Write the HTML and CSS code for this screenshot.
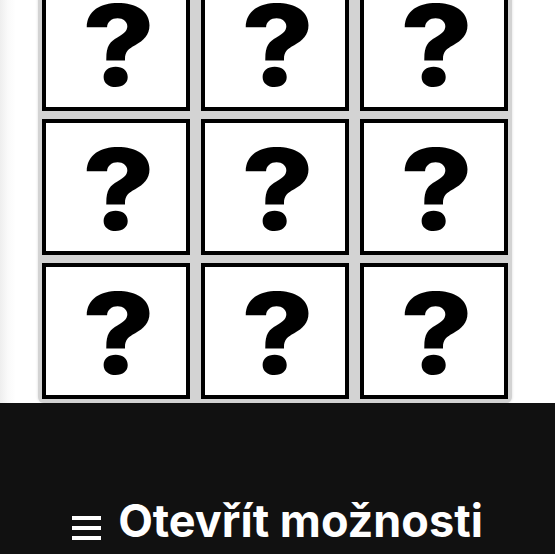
FILE: index.html
```html
<!DOCTYPE html>
<html lang="cs">
<head>
<meta charset="utf-8">
<title>Hra</title>
<link rel="stylesheet" href="styles.css">
</head>
<body>
<main class="page">
  <div class="board">
    <div class="card"><span class="mark">?</span></div>
    <div class="card"><span class="mark">?</span></div>
    <div class="card"><span class="mark">?</span></div>
    <div class="card"><span class="mark">?</span></div>
    <div class="card"><span class="mark">?</span></div>
    <div class="card"><span class="mark">?</span></div>
    <div class="card"><span class="mark">?</span></div>
    <div class="card"><span class="mark">?</span></div>
    <div class="card"><span class="mark">?</span></div>
  </div>
</main>
<footer class="bar">
  <button class="open-btn" type="button">
    <svg class="burger" width="29" height="24" viewBox="0 0 29 24" aria-hidden="true">
      <rect x="0" y="0" width="29" height="4" fill="#fff"/>
      <rect x="0" y="10" width="29" height="4" fill="#fff"/>
      <rect x="0" y="20" width="29" height="4" fill="#fff"/>
    </svg>
    <span class="label">Otevřít možnosti</span>
  </button>
</footer>
</body>
</html>
```
FILE: styles.css
```css
html, body {
  margin: 0;
  padding: 0;
}
body {
  background: linear-gradient(to right, #eeeeee 0, #fafafa 8px, #ffffff 16px);
  font-family: Inter, "Liberation Sans", sans-serif;
  overflow: hidden;
  height: 554px;
}
.page {
  padding-left: 38px;
}
.board {
  width: 466px;
  margin-top: -29px;
  padding: 4px;
  background: #d3d3d3;
  border-radius: 0 0 6px 6px;
  box-shadow: 0 0 3px rgba(0, 0, 0, 0.15);
  display: grid;
  grid-template-columns: repeat(3, 148px);
  grid-auto-rows: 136px;
  column-gap: 11px;
  row-gap: 8px;
}
.card {
  box-sizing: border-box;
  background: #fff;
  border: 4px solid #000;
  display: flex;
  align-items: center;
  justify-content: center;
}
.mark {
  font-family: Inter, "Liberation Sans", sans-serif;
  font-weight: 800;
  font-size: 113px;
  line-height: 1;
  color: #000;
  margin-left: 6px;
  margin-top: 4px;
  transform: scaleX(1.12);
}
.bar {
  background: #111111;
  height: 151px;
  display: flex;
  align-items: flex-end;
  justify-content: center;
}
.open-btn {
  background: none;
  border: 0;
  padding: 0 0 6px 0;
  color: #fff;
  display: flex;
  align-items: center;
  gap: 17px;
  font-family: Inter, "Liberation Sans", sans-serif;
  font-weight: 700;
  font-size: 45px;
  line-height: 1.2;
}
.burger {
  margin-top: 14px;
}
```
